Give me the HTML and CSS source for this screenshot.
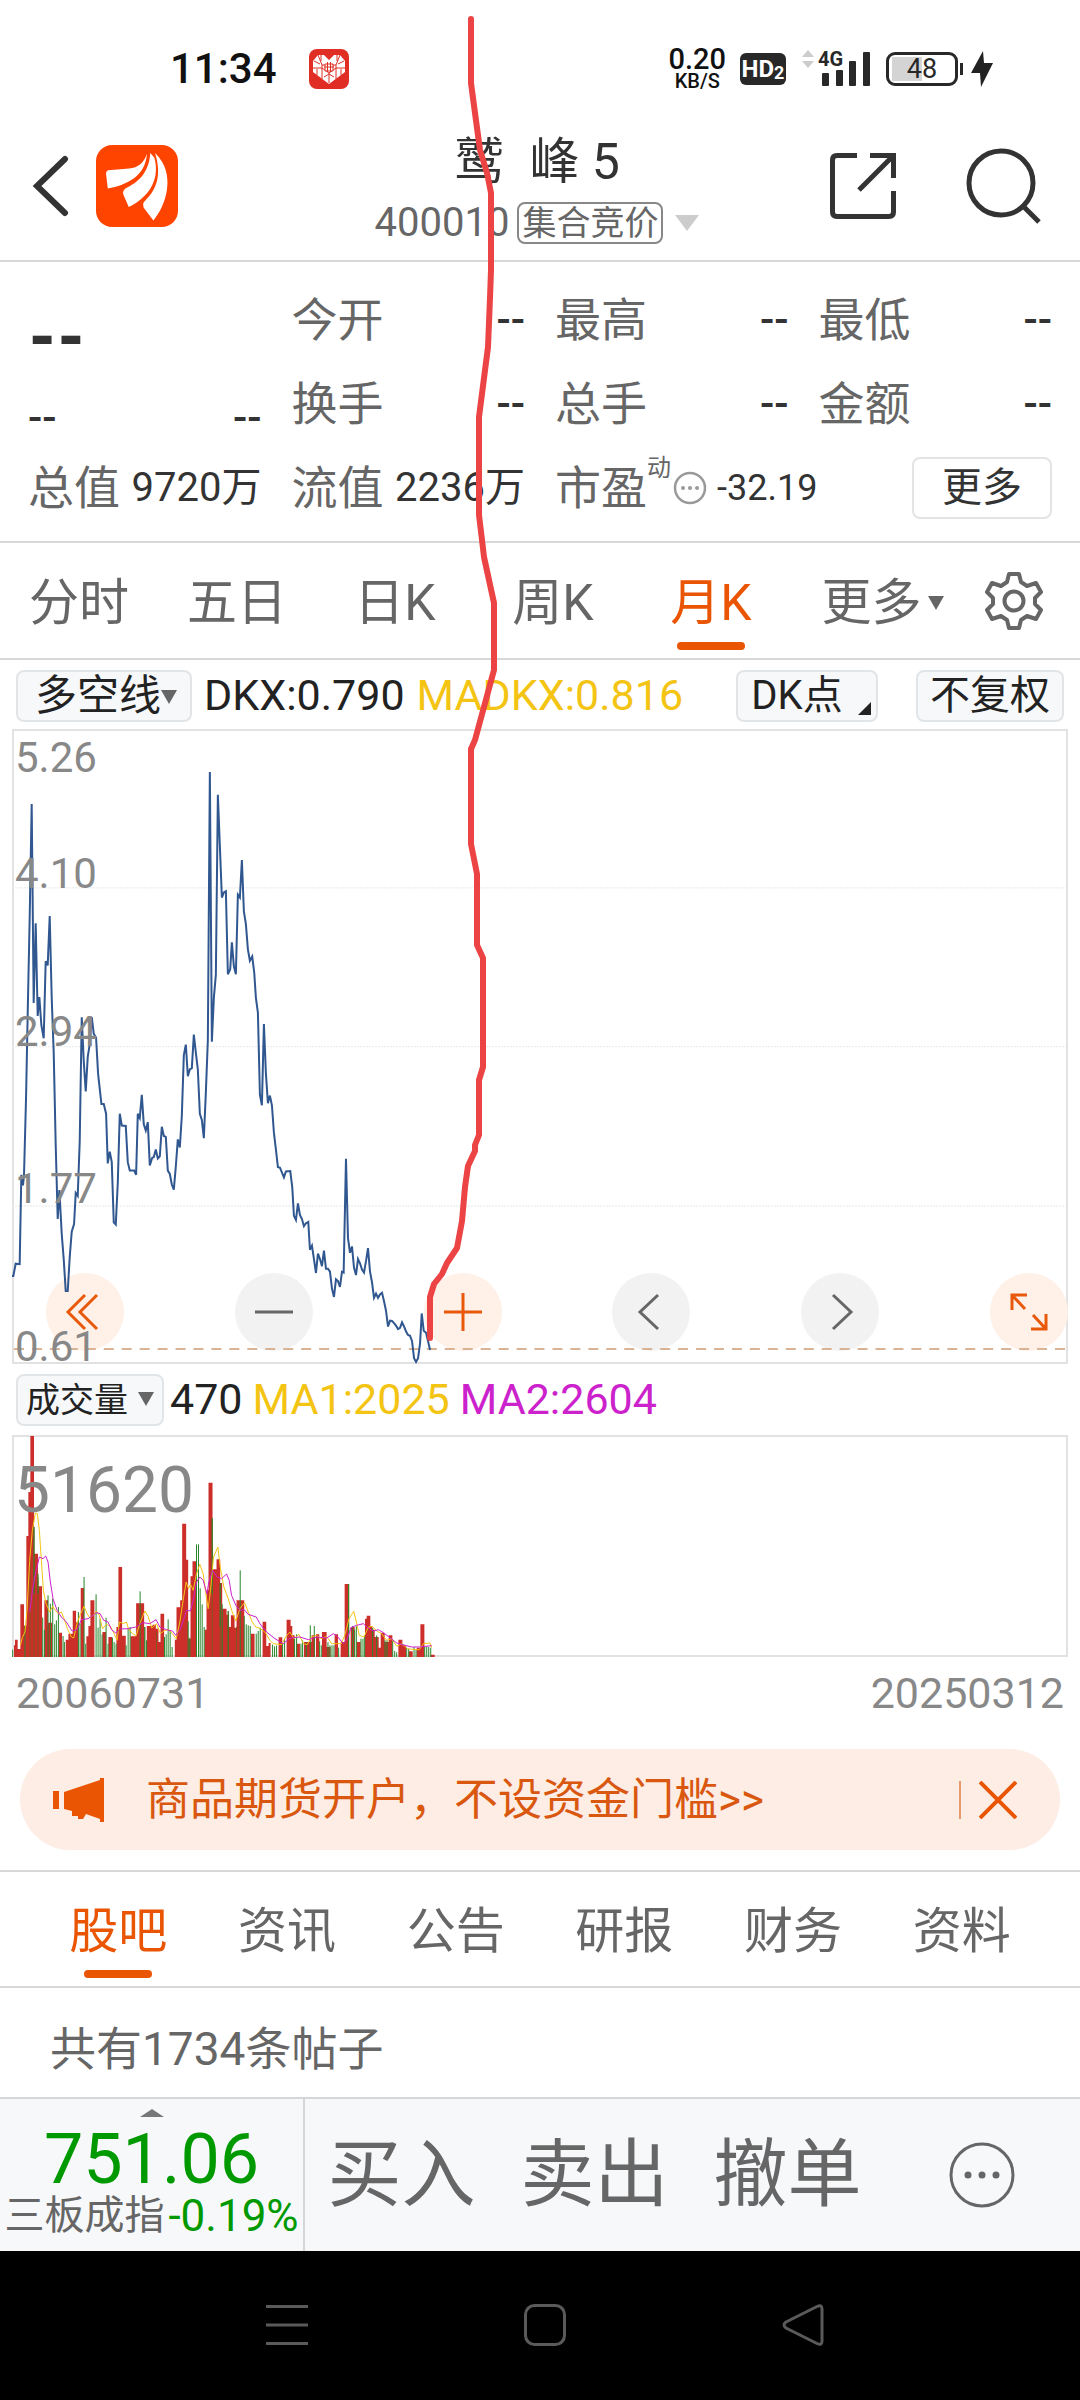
FILE: index.html
```html
<!DOCTYPE html>
<html lang="zh-CN">
<head>
<meta charset="utf-8">
<meta name="viewport" content="width=device-width">
<title>鹫峰5 400010</title>
<link rel="stylesheet" href="styles.css">
</head>
<body>
<div class="status">
  <span class="time">11:34</span>
  <svg class="app-badge" width="40" height="40" viewBox="0 0 40 40" aria-hidden="true">
    <rect width="40" height="40" rx="8" fill="#e02e24"/>
    <path d="M20 35 4 23V12l5-6h6l5 5 5-5h6l5 6v11z" fill="#fff"/>
    <path d="M9 6l4 10h14l4-10M3 19h10l7 5 7-5h10M13 16v14M27 16v14M20 24v10M12 6v6M28 6v6M5 12l6 3M35 12l-6 3M8 20v6M32 20v6M15 28l5-3 5 3" fill="none" stroke="#e02e24" stroke-width="1"/>
    <path d="M16 15h8v7h-8zM15 18h10M18.500 13v10M21.500 13v10" fill="#fff" stroke="#e02e24"/>
  </svg>
  <div class="speed"><span>0.20</span><small>KB/S</small></div>
  <span class="hd">HD<sub>2</sub></span>
  <div class="signal">
    <svg width="70" height="40" viewBox="0 0 70 40" aria-hidden="true">
      <path d="M0 8 6 1l6 7zM0 12h12l-6 7z" fill="#ccc"/>
      <g fill="#282828"><rect x="20" y="24" width="7" height="13" rx="1"/><rect x="34" y="21" width="7" height="16" rx="1"/><rect x="47" y="12" width="7" height="25" rx="1"/><rect x="61" y="3" width="7" height="34" rx="1"/></g>
    </svg>
    <span>4G</span>
  </div>
  <span class="battery">48</span>
  <svg width="24" height="36" viewBox="0 0 24 36" aria-hidden="true"><path d="M13 0 1 22h9l1 14L23 12h-9z" fill="#222"/></svg>
</div>

<header class="head">
  <div class="head-left">
    <button class="plain" aria-label="返回"><svg width="38" height="62" viewBox="0 0 38 62"><path d="M33 4 5 31l28 27" fill="none" stroke="#333" stroke-width="6" stroke-linecap="round"/></svg></button>
    <svg class="logo" width="82" height="82" viewBox="0 0 243 243" aria-hidden="true">
      <rect width="243" height="243" rx="48" fill="#ff4400"/>
      <path d="M151 25C143 52 125 67 98 70L36 75Q29 78 30 88L35 129C92 118 147 92 151 25Z" fill="#fff"/>
      <path d="M161 24C157 83 125 111 87 129Q78 137 81 147L97 184C146 161 193 111 173 38Z" fill="#fff"/>
      <path d="M175 24C198 98 174 138 142 169Q137 175 141 185L170 224C208 179 239 85 175 24Z" fill="#fff"/>
    </svg>
  </div>
  <div class="head-title">
    <h1>鹫&ensp;峰 5</h1>
    <div class="code"><span>400010</span><span class="tag">集合竞价</span><i class="tri"></i></div>
  </div>
  <div class="head-right">
    <button class="plain" aria-label="分享"><svg width="66" height="66" viewBox="0 0 66 66"><path d="M27 2.500H7Q2.500 2.500 2.500 7v52q0 4.500 4.500 4.500h52q4.500 0 4.500-4.500V38M40 2.500h23.500V25M62 4 29 37" fill="none" stroke="#333" stroke-width="5"/></svg></button>
    <button class="plain" aria-label="搜索"><svg width="76" height="76" viewBox="0 0 76 76"><circle cx="35" cy="35" r="32" fill="none" stroke="#333" stroke-width="5"/><path d="m57 58 16 16" stroke="#333" stroke-width="5"/></svg></button>
  </div>
</header>

<section class="quote">
  <div class="cell"><b class="price">--</b></div>
  <div class="cell"><span>今开</span><b>--</b></div>
  <div class="cell"><span>最高</span><b>--</b></div>
  <div class="cell"><span>最低</span><b>--</b></div>
  <div class="cell low"><b>--</b><b>--</b></div>
  <div class="cell"><span>换手</span><b>--</b></div>
  <div class="cell"><span>总手</span><b>--</b></div>
  <div class="cell"><span>金额</span><b>--</b></div>
  <div class="cell"><span>总值</span><em>9720万</em></div>
  <div class="cell"><span>流值</span><em>2236万</em></div>
  <div class="cell pe"><span>市盈<sup>动</sup></span>
    <svg width="34" height="34" viewBox="0 0 34 34" aria-hidden="true"><circle cx="17" cy="17" r="15" fill="none" stroke="#999" stroke-width="2.500"/><g fill="#999"><circle cx="10" cy="17" r="2"/><circle cx="17" cy="17" r="2"/><circle cx="24" cy="17" r="2"/></g></svg>
    <em>-32.19</em></div>
  <div class="cell"><button class="more">更多</button></div>
</section>

<nav class="periods">
  <a href="#">分时</a><a href="#">五日</a><a href="#">日K</a><a href="#">周K</a><a href="#" class="on">月K</a>
  <a href="#">更多<i class="tri"></i></a>
  <button class="plain" aria-label="设置"><svg width="58" height="60" viewBox="0 0 58 60"><path d="M24 3h10l2 8 6 4 9-3 5 9-6 6v6l6 6-5 9-9-3-6 4-2 8H24l-2-8-6-4-9 3-5-9 6-6v-6l-6-6 5-9 9 3 6-4z" fill="none" stroke="#666" stroke-width="4" stroke-linejoin="round"/><circle cx="29" cy="30" r="9.500" fill="none" stroke="#666" stroke-width="4"/></svg></button>
</nav>

<div class="indicator">
  <button class="chip line">多空线<i class="tri"></i></button>
  <span>DKX:0.790</span><span class="yellow">MADKX:0.816</span>
  <button class="chip dk">DK点<i class="corner"></i></button>
  <button class="chip">不复权</button>
</div>

<div class="chart">
  <svg class="plot" viewBox="37 22 3165 1507" preserveAspectRatio="none" aria-hidden="true">
    <path d="M37 399H3202M37 776H3202M37 1154H3202" class="grid-line"/>
    <polyline class="price-line" points="37,1320 41,1320 48,1291 60,1292 65,1080 70,1105 73,1080 79,900 85,660 90,470 96,200 102,672 108,483 114,703 119,658 125,725 132,756 138,573 144,583 150,466 156,660 162,790 168,1010 174,1185 179,1116 186,1220 192,1280 198,1356 204,1356 210,1275 216,1215 223,1197 228,1123 234,1130 240,1000 246,706 252,810 258,882 264,800 270,770 276,706 282,745 289,755 295,840 305,912 312,912 319,935 324,1053 330,1025 336,1050 342,1193 348,1198 354,1100 360,935 366,963 378,964 384,1050 390,1070 403,1070 409,1080 414,935 420,945 426,890 432,960 438,975 444,955 450,1058 457,1040 462,1038 468,1020 474,1041 480,1036 486,966 492,988 498,990 504,1070 510,1078 516,1103 522,1115 528,1060 534,996 540,1015 546,940 552,796 558,771 564,846 570,830 576,827 582,747 588,790 594,830 600,935 606,950 612,993 618,885 624,760 630,124 636,764 642,660 648,605 654,178 660,300 666,422 672,410 678,407 684,604 691,592 696,528 702,585 708,604 714,415 720,422 726,333 732,455 738,485 744,545 750,572 757,562 763,600 768,660 774,695 780,890 786,915 792,722 798,840 804,910 810,892 816,915 822,980 828,1020 834,1062 840,1063 852,1086 858,1072 871,1071 877,1110 882,1177 888,1187 894,1148 900,1175 906,1185 912,1202 918,1195 925,1192 930,1258 936,1248 942,1280 948,1313 954,1267 960,1280 966,1297 972,1260 978,1303 984,1303 990,1310 996,1350 1002,1370 1008,1328 1014,1332 1020,1346 1026,1310 1031,1312 1038,1042 1044,1230 1050,1265 1056,1250 1062,1300 1068,1318 1074,1280 1080,1290 1086,1305 1092,1312 1098,1285 1104,1254 1110,1310 1116,1335 1122,1372 1128,1362 1134,1372 1140,1364 1146,1360 1152,1380 1158,1403 1164,1440 1170,1426 1176,1427 1182,1432 1188,1438 1194,1446 1200,1443 1206,1430 1212,1440 1218,1452 1224,1460 1230,1462 1236,1475 1242,1515 1248,1524 1254,1515 1260,1480 1265,1409 1271,1450 1278,1455 1284,1475 1290,1496"/>
  </svg>
  <div class="tools">
    <button class="round hot" aria-label="最早"><svg viewBox="0 0 78 78"><path d="M39 22 22 39l17 17M51 22 34 39l17 17"/></svg></button>
    <button class="round" aria-label="缩小"><svg viewBox="0 0 78 78"><path d="M20 39h38"/></svg></button>
    <button class="round hot" aria-label="放大"><svg viewBox="0 0 78 78"><path d="M20 39h38M39 20v38"/></svg></button>
    <button class="round" aria-label="向左"><svg viewBox="0 0 78 78"><path d="M46 22 28 39l18 17"/></svg></button>
    <button class="round" aria-label="向右"><svg viewBox="0 0 78 78"><path d="m32 22 18 17-18 17"/></svg></button>
    <button class="round hot" aria-label="全屏"><svg viewBox="0 0 78 78"><path d="M22 37V22h15M22 22l13 14M56 41v15H41M56 56 43 42"/></svg></button>
  </div>
  <svg class="last" viewBox="0 0 1055 2" preserveAspectRatio="none" aria-hidden="true"><path d="M0 1H1055" stroke="#d9b393" stroke-width="2" stroke-dasharray="10 8"/></svg>
  <div class="axis">
    <div><span>5.26</span><span>4.10</span></div>
    <div><span>2.94</span></div>
    <div><span>1.77</span></div>
    <div><span>0.61</span></div>
  </div>
</div>

<div class="indicator volume-row">
  <button class="chip vol">成交量<i class="tri"></i></button>
  <span>470</span><span class="yellow">MA1:2025</span><span class="purple">MA2:2604</span>
</div>

<div class="chart volume">
  <svg class="plot" viewBox="37 224 3165 666" preserveAspectRatio="none" aria-hidden="true">
    <path fill="#cc2e2a" d="M43 890V855H46V838H54V866H62V732H73V796H80V527H86V395H92V227H103V580H115V678H127V890ZM134 890V720H145V787H157V890ZM177 890V817H187V890ZM198 890V838H206V820H219V751H229V786H236V890ZM243 890V683H253V890ZM260 890V828H266V797H272V720H284V890ZM308 890V815H319V890ZM326 890V830H337V890ZM350 890V800H356V620H367V826H378V890ZM392 890V828H409V729H433V890ZM441 890V797H458V793H468V805H476V845H482V760H493V890ZM525 890V838H530V741H541V720H547V490H559V598H565V835H572V648H578V603H590V890ZM614 890V808H620V690H626V367H638V627H650V597H661V668H667V745H680V763H687V800H693V765H704V802H710V720H733V890ZM753 890V820H764V890ZM788 890V784H799V857H806V848H812V890ZM836 890V831H847V890ZM860 890V778H872V797H877V825H884V890ZM890 890V850H900V890ZM912 890V845H935V825H945V890ZM948 890V822H958V890ZM966 890V815H980V860H992V890ZM1004 890V822H1014V890ZM1022 890V845H1034V671H1046V890ZM1052 890V800H1064V890ZM1070 890V845H1082V890ZM1095 890V775H1100V766H1111V797H1117V808H1124V830H1136V862H1142V817H1154V845H1166V825H1177V890ZM1195 890V838H1207V855H1218V890ZM1226 890V873H1238V890ZM1250 890V862H1261V792H1273V890ZM1292 890V883H1304V890Z"/>
    <path class="dark" d="M91 890V600M103 890V500M115 890V650M435 890V800M470 890V815M637 890V474M661 890V668M685 890V752M710 890V800M1046 890V671"/>
    <path class="green" d="M39 890V868M76 890V796M103 700V500M115 700V640M129 890V772M134 890V808M145 890V705M152 890V730M159 890V715M165 890V792M170 890V780M176 890V740M190 890V827M194 890V845M236 890V755M241 890V790M253 890V650M258 890V850M289 890V702M295 890V802M301 890V775M307 890V822M319 890V772M325 890V850M338 890V832M343 890V845M349 890V850M379 890V855M385 890V805M391 890V800M421 890V693M435 890V800M440 890V840M494 890V830M499 890V822M505 890V777M511 890V812M517 890V860M565 890V783M570 890V832M590 890V552M596 890V552M601 890V684M607 890V732M613 890V800M637 700V474M661 800V668M667 890V732M685 890V752M721 890V630M733 890V767M739 890V792M745 890V795M751 890V797M769 890V820M775 890V812M781 890V802M818 890V853M824 890V858M830 890V856M848 890V850M854 890V835M884 890V835M890 890V822M903 890V850M908 890V840M919 890V848M931 890V795M943 890V797M959 890V843M964 890V855M984 890V846M990 890V855M996 890V855M1002 890V855M1016 890V862M1046 890V671M1058 890V798M1064 890V808M1069 890V798M1083 890V835M1089 890V835M1094 890V825M1118 890V803M1130 890V825M1155 890V840M1161 890V838M1178 890V840M1184 890V872M1190 890V876M1220 890V862M1226 890V865M1242 890V860M1248 890V868M1274 890V858M1280 890V858M1286 890V860M1292 890V862"/>
    <path class="ma yellow-line" d="M62 855 68 832 76 815 82 750 90 600 98 510 107 458 113 460 119 510 125 600 131 690 139 730 150 755 159 738 167 750 175 760 185 755 193 775 203 805 215 830 222 833 233 785 243 760 253 738 262 760 270 772 280 765 290 752 299 765 308 805 320 792 332 798 343 820 352 840 359 785 370 790 380 785 386 805 398 820 409 826 420 790 435 752 445 768 456 803 470 790 482 820 495 810 507 808 519 822 529 835 540 785 550 720 559 665 566 685 572 672 580 690 590 640 600 612 610 640 618 700 625 745 632 690 641 590 654 560 661 620 672 680 685 715 697 755 708 782 720 745 734 727 745 755 757 785 768 800 780 804 795 815 810 840 820 850 845 853 857 830 870 815 882 835 897 822 910 850 922 853 935 830 950 825 963 835 980 828 995 850 1012 850 1024 850 1036 820 1047 775 1061 753 1068 780 1078 825 1092 830 1105 800 1117 798 1130 812 1145 820 1160 840 1175 835 1190 858 1206 850 1222 865 1245 868 1258 868 1270 850 1290 848 1295 862"/>
    <path class="ma purple-line" d="M90 755 97 700 105 650 119 590 130 595 138 587 145 605 152 665 160 715 172 750 185 770 200 785 217 812 232 808 245 778 265 775 280 765 290 757 301 760 312 780 325 785 335 808 348 818 360 806 385 805 408 800 430 787 450 790 469 778 480 800 500 808 518 812 528 825 540 810 552 775 560 750 572 752 580 720 590 665 600 650 610 660 621 700 627 665 638 630 652 650 665 655 680 641 688 660 695 705 708 735 720 750 733 748 745 762 769 770 780 790 800 815 825 835 850 850 868 835 880 832 900 830 925 838 950 830 980 833 1000 820 1012 828 1030 850 1042 835 1053 802 1070 795 1090 790 1103 802 1120 812 1135 808 1150 817 1170 832 1190 848 1215 855 1235 860 1258 860 1275 858 1295 856"/>
  </svg>
  <span class="peak">51620</span>
</div>
<div class="dates"><span>20060731</span><span>20250312</span></div>

<aside class="banner">
  <svg width="52" height="46" viewBox="0 0 52 46" aria-hidden="true"><path d="M0 14h6v18H0zM11 15 47 3V1h4v44h-4v-3L33 37l-3 5h-5v-3h-6v-5l-8-2z" fill="#ea5504"/></svg>
  <a href="#">商品期货开户，不设资金门槛&gt;&gt;</a>
  <button class="plain close" aria-label="关闭"><svg width="38" height="38" viewBox="0 0 38 38"><path d="m1 1 36 36M37 1 1 37" stroke="#ea5504" stroke-width="4"/></svg></button>
</aside>

<nav class="sections">
  <a href="#" class="on">股吧</a><a href="#">资讯</a><a href="#">公告</a><a href="#">研报</a><a href="#">财务</a><a href="#">资料</a>
</nav>
<main class="posts">共有1734条帖子</main>

<footer class="trade">
  <div class="index">
    <i class="up"></i>
    <strong>751.06</strong>
    <div><span>三板成指</span><em>-0.19%</em></div>
  </div>
  <button class="plain">买入</button><button class="plain">卖出</button><button class="plain">撤单</button>
  <button class="plain dots" aria-label="更多操作"><svg width="68" height="68" viewBox="0 0 68 68"><circle cx="34" cy="34" r="31" fill="none" stroke="#666" stroke-width="3"/><g fill="#666"><circle cx="20" cy="34" r="3.500"/><circle cx="34" cy="34" r="3.500"/><circle cx="48" cy="34" r="3.500"/></g></svg></button>
</footer>
<div class="system">
  <button class="plain" aria-label="菜单"><svg width="42" height="42" viewBox="0 0 42 42"><path d="M0 2.500h42M0 21h42M0 39.500h42"/></svg></button>
  <button class="plain" aria-label="主页"><svg width="42" height="42" viewBox="0 0 42 42"><rect x="1.500" y="1.500" width="39" height="39" rx="9"/></svg></button>
  <button class="plain" aria-label="后退"><svg width="42" height="42" viewBox="0 0 42 42"><path d="M4 18 35 2.500Q40 0 40 5V37Q40 42 35 39.500L4 24Q0 21 4 18Z"/></svg></button>
</div>

<svg class="pen" viewBox="0 0 1080 2400" preserveAspectRatio="none" aria-hidden="true"><polyline points="471,19 471,83 475,113 480,150 487,173 491,193 491,270 490,298 488,347 479,417 479,515 482,540 484,557 494,603 494,670 475,740 471,749 471,844 474,859 477,874 477,945 483,958 483,1067 479,1080 479,1135 475,1145 475,1151 468,1166 465,1187 462,1221 457,1248 447,1263 442,1274 434,1284 430,1297 430,1338"/></svg>
</body>
</html>
```
FILE: styles.css
```css
* { box-sizing: border-box; }
body {
  position: relative;
  margin: 0;
  min-height: 100vh;
  display: flex;
  flex-direction: column;
  background: #fff;
  color: #666;
  font-family: Roboto, "Noto Sans CJK SC", sans-serif;
  font-size: 42px;
  line-height: 1;
  white-space: nowrap;
}
a { color: inherit; text-decoration: none; }
em, i { font-style: normal; }
svg { display: block; flex-shrink: 0; }
button { font: inherit; color: inherit; cursor: pointer; }
.plain { padding: 0; border: 0; background: none; }

.tri {
  display: inline-block;
  border: 8px solid transparent;
  border-top: 14px solid #666;
  border-bottom: 0;
}

/* status bar */
.status {
  display: flex;
  align-items: center;
  height: 120px;
  padding: 18px 86px 0 170px;
  color: #111;
}
.time { font-weight: 500; }
.app-badge { margin: 0 auto 0 32px; }
.speed { display: flex; flex-direction: column; align-items: center; font-size: 29px; line-height: 24px; font-weight: 500; }
.speed small { font-size: 20px; line-height: 20px; }
.hd {
  margin: 0 16px 0 14px;
  width: 46px;
  height: 32px;
  border-radius: 6px;
  background: #282828;
  color: #fff;
  font-size: 24px;
  line-height: 32px;
  font-weight: 700;
  text-align: center;
}
.hd sub { font-size: 18px; line-height: 0; vertical-align: -2px; }
.signal { position: relative; }
.signal span { position: absolute; left: 16px; top: 0; font-size: 20px; font-weight: 700; color: #282828; }
.battery {
  position: relative;
  width: 72px;
  height: 34px;
  margin: 0 12px 0 14px;
  border: 3px solid #282828;
  border-radius: 9px;
  background: linear-gradient(#d4d4d4, #d4d4d4) 3px 2px / 30px 24px no-repeat;
  font-size: 27px;
  line-height: 28px;
  text-align: center;
  color: #282828;
}
.battery::after { content: ""; position: absolute; right: -8px; top: 8px; width: 3px; height: 12px; background: #282828; }

/* stock title */
.head {
  display: grid;
  grid-template-columns: 1fr auto 1fr;
  align-items: center;
  height: 142px;
  padding: 0 38px 0 32px;
  border-bottom: 2px solid #d8d8d8;
}
.head-left, .head-right { display: flex; align-items: center; padding-bottom: 8px; }
.head-left { gap: 26px; }
.head-right { justify-content: flex-end; gap: 70px; }
h1 { margin: 0 0 14px; font-size: 50px; line-height: 52px; font-weight: 400; color: #333; text-align: center; white-space: pre; }
.code { display: flex; align-items: center; gap: 8px; font-size: 40px; line-height: 42px; }
.tag { padding: 0 3px; border: 2px solid #888; border-radius: 8px; font-size: 34px; line-height: 38px; }
.code .tri { margin-left: 4px; border-width: 16px 12px 0; border-top-color: #ccc; }

/* quote figures */
.quote {
  display: grid;
  grid-template-columns: repeat(4, 1fr);
  grid-auto-rows: 84px;
  column-gap: 30px;
  height: 281px;
  padding: 16px 28px 0;
  border-bottom: 2px solid #d8d8d8;
  font-size: 46px;
}
.cell { display: flex; align-items: center; justify-content: space-between; min-width: 0; }
.cell b { font-size: 42px; font-weight: 500; color: #333; }
.cell .price { font-size: 64px; font-weight: 900; padding-top: 38px; }
.low { padding-top: 28px; }
.cell em { font-size: 40px; color: #333; }
.pe { justify-content: flex-start; gap: 2px; }
.pe sup { font-size: 24px; line-height: 0; vertical-align: 28px; }
.pe em { margin-left: 8px; font-size: 36px; }
.more { margin-left: auto; width: 140px; height: 62px; padding: 0; border: 2px solid #e4e4e4; border-radius: 8px; background: #fff; font-size: 40px; color: #333; }

/* chart periods */
.periods {
  display: grid;
  grid-template-columns: repeat(5, 158fr) 185fr 78fr;
  height: 117px;
  padding-right: 27px;
  border-bottom: 2px solid #d8d8d8;
  font-size: 50px;
  align-items: center;
}
.periods a, .sections a { position: relative; display: flex; align-items: center; justify-content: center; height: 100%; padding-top: 5px; }
.periods .tri { margin-left: 6px; }
.periods .plain { justify-self: center; }
.on { color: #ea5504; }
.on::after { content: ""; position: absolute; bottom: 8px; left: calc(50% - 34px); width: 68px; height: 8px; border-radius: 4px; background: #ea5504; }

.indicator { display: flex; align-items: center; gap: 12px; height: 69px; padding: 2px 16px 0; font-size: 43px; color: #222; }
.chip { height: 52px; padding: 0 12px; border: 2px solid #e2e5e8; border-radius: 8px; background: #f6f8fa; font-size: 40px; line-height: 44px; color: #222; }
.line { width: 176px; padding: 0 0 0 4px; font-size: 42px; }
.line .tri, .vol .tri { vertical-align: 6px; }
.dk { position: relative; width: 142px; margin: 0 26px 0 auto; padding: 0 20px 0 0; }
.corner { position: absolute; right: 5px; bottom: 5px; border-left: 13px solid transparent; border-bottom: 13px solid #222; }
.vol { width: 148px; padding: 0; font-size: 34px; }
.volume-row { height: 71px; padding-top: 0; gap: 10px; }
.volume-row .vol { margin-right: -4px; }
.volume-row .tri { margin-left: 10px; }
.yellow { color: #f4c414; }
.purple { color: #cc22cc; }

/* charts */
.chart { position: relative; height: 635px; margin: 0 12px; border: 2px solid #e2e2e2; }
.plot { position: relative; z-index: 1; width: calc(100% + 4px); height: calc(100% + 4px); margin: -2px; pointer-events: none; }
.plot path, .plot polyline { vector-effect: non-scaling-stroke; }
.grid-line { stroke: #e8e8e8; stroke-width: 1; stroke-dasharray: 2 1; }
.price-line { fill: none; stroke: #30578f; stroke-width: 2; }
.tools { position: absolute; left: 32px; right: -2px; bottom: 11px; display: flex; justify-content: space-between; }
.round { width: 78px; height: 78px; padding: 0; border: 0; border-radius: 50%; background: #f2f2f2; }
.round svg { fill: none; stroke: #666; stroke-width: 3; }
.hot { background: #fff0e8; }
.hot svg { stroke: #e8590c; }
.last { position: absolute; left: 0; bottom: 12px; width: 100%; height: 2px; }
.axis { position: absolute; z-index: 2; inset: 0 auto 0 1px; display: grid; grid-template-rows: repeat(4, 1fr); line-height: 30px; color: #888; pointer-events: none; }
.axis div { display: flex; flex-direction: column; justify-content: flex-end; }
.axis div:first-child { justify-content: space-between; padding-top: 12px; }
.volume { height: 222px; }
.green { stroke: #26862a; stroke-width: 1; }
.dark { stroke: #7d5a1e; stroke-width: 1; }
.ma { fill: none; stroke-width: 1; }
.yellow-line { stroke: #f4c414; }
.purple-line { stroke: #cc22cc; }
.peak { position: absolute; z-index: 2; left: 0; top: 22px; font-size: 64px; color: #888; }
.dates { display: flex; justify-content: space-between; align-items: center; height: 73px; padding: 0 16px; font-size: 43px; color: #888; }

.banner {
  display: flex;
  align-items: center;
  height: 101px;
  margin: 19px 20px 20px;
  padding: 0 43px 0 33px;
  border-radius: 51px;
  background: #fdede4;
  color: #d9570f;
  font-size: 44px;
}
.banner a { margin: 0 auto 0 41px; }
.close { padding-left: 18px; border-left: 2px solid #e49a6c; }

.sections { display: grid; grid-template-columns: repeat(6, 1fr); height: 118px; padding: 0 34px; border: solid #d8d8d8; border-width: 2px 0; font-size: 49px; }
.posts { flex: 1; min-height: 109px; padding: 38px 50px 0; font-size: 46px; }

/* trading bar */
.trade { display: grid; grid-template-columns: 305fr 193fr 193fr 193fr 196fr; height: 154px; border-top: 2px solid #d4d6d9; background: #f6f8fa; font-size: 74px; }
.index { display: flex; flex-direction: column; align-items: center; border-right: 2px solid #d4d6d9; color: #090; }
.up { margin-top: 10px; border: 12px solid transparent; border-top: 0; border-bottom: 8px solid #777; }
.index strong { margin-top: 7px; font-size: 70px; line-height: 70px; font-weight: 400; }
.index div { display: flex; align-items: center; gap: 4px; font-size: 40px; line-height: 44px; }
.index span { color: #666; }
.index em { font-size: 44px; }
.dots { justify-self: center; }
.system { display: flex; justify-content: center; align-items: center; gap: 216px; height: 149px; padding: 0 0 2px 10px; background: #000; }
.system svg { fill: none; stroke: #5a5a5a; stroke-width: 3; }

/* freehand stroke over the page */
.pen { position: absolute; z-index: 3; left: 0; top: 0; width: 100%; height: 100%; pointer-events: none; }
.pen polyline { fill: none; stroke: #ec4444; stroke-width: 6; stroke-linecap: round; stroke-linejoin: round; }
```
